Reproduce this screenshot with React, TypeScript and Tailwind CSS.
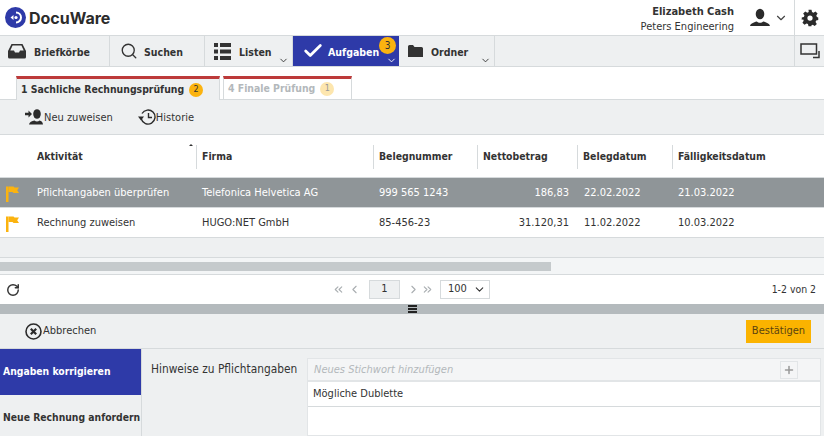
import { Check, ChevronDown, ChevronLeft, ChevronRight, ChevronsLeft, ChevronsRight, Plus, RotateCw, Search } from 'lucide-react'

const font = "font-['DejaVu_Sans_Condensed','DejaVu_Sans',sans-serif]"

function Tray() {
  return (
    <svg width="18" height="16" viewBox="0 0 18 16" fill="#333">
      <path d="M3.5 1h11L18 8v6a1.5 1.5 0 0 1-1.5 1.5h-15A1.5 1.5 0 0 1 0 14V8zM4.6 2.6 2.3 7.6H6l1 2h4l1-2h3.7l-2.3-5z" fillRule="evenodd" />
    </svg>
  )
}

function ListIcon() {
  return (
    <svg width="17" height="17" viewBox="0 0 17 17" fill="#333">
      <rect x="0" y="0" width="4" height="4" /><rect x="6" y="0" width="11" height="4" />
      <rect x="0" y="6.500" width="4" height="4" /><rect x="6" y="6.500" width="11" height="4" />
      <rect x="0" y="13" width="4" height="4" /><rect x="6" y="13" width="11" height="4" />
    </svg>
  )
}

function Folder() {
  return (
    <svg width="15" height="12" viewBox="0 0 15 12" fill="#333">
      <path d="M0 1.500A1.500 1.500 0 0 1 1.500 0h3.500l1.500 2h7A1.500 1.500 0 0 1 15 3.500V12H0z" />
    </svg>
  )
}

function Person({ size = 20 }: { size?: number }) {
  return (
    <svg width={size} height={size} viewBox="0 0 20 20" fill="#2b2b2b">
      <ellipse cx="10" cy="6" rx="4.300" ry="5.200" />
      <path d="M0 18c.5-2.500 3.500-3.600 6.800-4.500.8.900 2 1.300 3.200 1.300s2.400-.4 3.200-1.300c3.300.9 6.300 2 6.800 4.500z" />
    </svg>
  )
}

function Gear() {
  return (
    <svg width="18" height="18" viewBox="0 0 24 24" fill="#2b2b2b">
      <path fillRule="evenodd" d="M10 1h4l.7 3.100 1.900.8 2.700-1.700 2.800 2.800-1.700 2.700.8 1.900L23 11.300v3.400l-2.800.7-.8 1.900 1.700 2.700-2.800 2.800-2.700-1.700-1.900.8L14 23h-4l-.7-2.900-1.900-.8-2.700 1.700-2.800-2.800 1.700-2.700-.8-1.900L1 14.700v-3.400l2.800-.7.800-1.900-1.700-2.700 2.800-2.800 2.700 1.700 1.900-.8zM12 8.500a3.500 3.500 0 1 0 0 7 3.500 3.500 0 0 0 0-7z" />
    </svg>
  )
}

function Windows() {
  return (
    <svg width="20" height="16" viewBox="0 0 20 16" fill="none" stroke="#333">
      <rect x="1" y="1" width="15.500" height="10" strokeWidth="1.500" />
      <path d="M19 8v6.500h-6" strokeWidth="1.500" />
    </svg>
  )
}

function Flag() {
  return (
    <svg width="13" height="16" viewBox="0 0 13 16" fill="#fbb30f">
      <rect x="0" y="0.500" width="2.500" height="15.500" />
      <path d="M2.500 0.500h5l1 1h4.500l-1.800 2.700 1.800 2.800H7.500l-1-1h-4z" />
    </svg>
  )
}

function AssignIcon() {
  return (
    <svg width="18" height="16" viewBox="0 0 18 16" fill="#2b2b2b">
      <path d="M0 3.800h3.500V1.500L7 5 3.500 8.500V6.200H0z" />
      <ellipse cx="12" cy="5" rx="3.800" ry="4.800" />
      <path d="M4 15.500c.2-2.300 3-3.600 5.500-4 .7.700 1.500 1 2.500 1s1.800-.3 2.500-1c2 .4 3.300 1.700 3.500 4z" />
    </svg>
  )
}

function HistoryIcon() {
  return (
    <svg width="18" height="18" viewBox="0 0 18 18" fill="none" stroke="#2b2b2b" strokeWidth="1.400">
      <path d="M4 5.500A7 7 0 1 1 3.300 11" />
      <path d="M10.500 5v4.500h3.500" />
      <path d="M0 8.500h6L3 12.500z" fill="#2b2b2b" stroke="none" />
    </svg>
  )
}

function CancelIcon() {
  return (
    <svg width="17" height="17" viewBox="0 0 17 17" fill="none" stroke="#2b2b2b">
      <circle cx="8.500" cy="8.500" r="7.500" strokeWidth="1.600" />
      <path d="M5.800 5.800l5.400 5.400M11.200 5.800l-5.400 5.400" strokeWidth="2.200" />
    </svg>
  )
}

function NavItem({ icon, label, width, chevron }: { icon: React.ReactNode; label: string; width: string; chevron?: boolean }) {
  return (
    <div className={`relative flex items-center h-full border-r border-[#d6dadc] ${width}`}>
      <div className="flex w-[34px] shrink-0 justify-center">{icon}</div>
      <span className="pt-[3px] text-[10.5px] font-bold text-[#333]">{label}</span>
      {chevron && <ChevronDown size={11} className="absolute right-[3px] bottom-0 text-[#333]" />}
    </div>
  )
}

function HeaderCell({ label, width }: { label: string; width: string }) {
  return (
    <div className={`flex h-[24px] items-center border-l border-[#d6dadc] pl-[5px] text-[10.4px] font-bold text-[#333] ${width}`}>
      {label}
    </div>
  )
}

function Row({ cells, selected }: { cells: string[]; selected?: boolean }) {
  return (
    <div className={`flex h-[30px] items-center pt-[2px] text-[11px] border-b border-[#d6dadc] ${selected ? 'bg-[#8f9598] text-white' : 'bg-white text-[#333]'}`}>
      <div className="flex w-[37px] shrink-0 pl-[6px]"><Flag /></div>
      <div className="w-[165px]">{cells[0]}</div>
      <div className="w-[177px]">{cells[1]}</div>
      <div className="w-[90px]">{cells[2]}</div>
      <div className="w-[100px] text-right">{cells[3]}</div>
      <div className="w-[15px]" />
      <div className="w-[94px]">{cells[4]}</div>
      <div>{cells[5]}</div>
    </div>
  )
}

export default function App() {
  return (
    <div className={`flex h-[436px] w-[824px] flex-col overflow-hidden bg-white ${font}`}>
      <header className="flex h-[35px] shrink-0 items-center">
        <div className="flex items-center pl-[5px]">
          <svg width="21" height="21" viewBox="0 0 21 21">
            <circle cx="10.500" cy="10.500" r="10.500" fill="#2e3aa8" />
            <path d="M11 5.500a5 5 0 1 1 0 10" fill="none" stroke="#fff" strokeWidth="2" />
            <path d="M5.500 10.500l3-2.600v5.200z" fill="#fff" />
            <circle cx="11" cy="10.500" r="1.600" fill="#fff" />
          </svg>
          <span className="ml-[3px] font-['Inter',sans-serif] text-[16px] leading-none font-bold text-[#2b2b2b]">DocuWare</span>
        </div>
        <div className="flex-1" />
        <div className="mr-[16px] pt-[2px] text-right text-[11px] leading-[15px] text-[#333]">
          <div className="text-[11px] font-bold">Elizabeth Cash</div>
          <div>Peters Engineering</div>
        </div>
        <Person />
        <ChevronDown size={14} className="ml-[4px] mr-[6px] text-[#444]" />
        <div className="flex h-full w-[30px] items-center justify-center border-l border-[#d6dadc]"><Gear /></div>
      </header>

      <nav className="flex h-[32px] shrink-0 items-center border-y border-[#d6dadc] bg-[#eef0f1]">
        <NavItem icon={<Tray />} label="Briefkörbe" width="w-[110px]" />
        <NavItem icon={<Search size={18} strokeWidth={1.800} className="ml-[4px] text-[#333]" />} label="Suchen" width="w-[95px]" />
        <NavItem icon={<ListIcon />} label="Listen" width="w-[88px]" chevron />
        <div className="relative flex h-full w-[106px] items-center bg-[#2e3aa8] pl-[9px] text-white">
          <Check size={22} strokeWidth={3} />
          <span className="ml-[4px] pt-[3px] text-[10.5px] font-bold">Aufgaben</span>
          <span className="absolute top-[1px] right-[3px] flex h-[17px] w-[17px] items-center justify-center rounded-full bg-[#fbb30f] text-[10px] text-[#333]">3</span>
          <ChevronDown size={11} className="absolute right-[2px] bottom-0" />
        </div>
        <div className="relative flex h-full w-[96px] items-center border-r border-[#d6dadc]">
          <div className="flex w-[32px] justify-center"><Folder /></div>
          <span className="pt-[3px] text-[10.5px] font-bold text-[#333]">Ordner</span>
          <ChevronDown size={11} className="absolute right-[3px] bottom-0 text-[#333]" />
        </div>
        <div className="flex-1" />
        <div className="flex h-full w-[30px] items-center justify-center border-l border-[#d6dadc]"><Windows /></div>
      </nav>

      <div className="flex h-[33px] shrink-0 items-end gap-[3px] border-b border-[#d6dadc] pl-[16px]">
        <div className="-mb-px flex h-[24px] w-[204px] items-center gap-[5px] whitespace-nowrap border-x border-t-[3px] border-x-[#d6dadc] border-t-[#bd3a3a] bg-[#eef0f1] pl-[4px] text-[10.4px] font-bold text-[#333]">
          1 Sachliche Rechnungsprüfung
          <span className="flex h-[14px] w-[14px] items-center justify-center rounded-full bg-[#fbb30f] text-[9px] font-normal">2</span>
        </div>
        <div className="flex h-[23px] w-[129px] items-center gap-[5px] whitespace-nowrap border-x border-t-[3px] border-x-[#d6dadc] border-t-[#bd3a3a] bg-white pl-[4px] text-[10.4px] font-bold text-[#b3b8bb]">
          4 Finale Prüfung
          <span className="flex h-[14px] w-[14px] items-center justify-center rounded-full bg-[#fde6ae] text-[9px] font-normal text-[#999]">1</span>
        </div>
      </div>

      <div className="flex h-[35px] shrink-0 items-center border-b border-[#d6dadc] bg-[#eef0f1] pl-[25px] text-[11px] text-[#333]">
        <AssignIcon />
        <span className="ml-px pt-[2px]">Neu zuweisen</span>
        <div className="ml-[25px] flex"><HistoryIcon /></div>
        <span className="pt-[2px]">Historie</span>
      </div>

      <div className="flex h-[42px] shrink-0 items-center bg-white pt-[2px]">
        <div className="relative w-[196px] pl-[37px] text-[10.4px] font-bold text-[#333]">
          Aktivität
          <span className="absolute top-[-5px] right-[3px] h-0 w-0 border-x-[2px] border-b-[2px] border-x-transparent border-b-[#333]" />
        </div>
        <HeaderCell label="Firma" width="w-[177px]" />
        <HeaderCell label="Belegnummer" width="w-[104px]" />
        <HeaderCell label="Nettobetrag" width="w-[100px]" />
        <HeaderCell label="Belegdatum" width="w-[95px]" />
        <HeaderCell label="Fälligkeitsdatum" width="w-[140px]" />
      </div>

      <div className="shrink-0 border-t border-[#d6dadc]">
        <Row selected cells={['Pflichtangaben überprüfen', 'Telefonica Helvetica AG', '999 565 1243', '186,83', '22.02.2022', '21.03.2022']} />
        <Row cells={['Rechnung zuweisen', 'HUGO:NET GmbH', '85-456-23', '31.120,31', '11.02.2022', '10.03.2022']} />
      </div>

      <div className="h-[20px] shrink-0 border-b border-[#d6dadc] bg-[#eef0f1]" />
      <div className="flex h-[17px] shrink-0 items-center border-b border-[#d6dadc] bg-[#f3f5f6]">
        <div className="h-[9px] w-[551px] bg-[#c5cacc]" />
      </div>

      <div className="flex h-[29px] shrink-0 items-center bg-white text-[11px] text-[#333]">
        <RotateCw size={14} strokeWidth={2.500} className="ml-[6px] text-[#333]" />
        <div className="ml-[312px] flex items-center text-[#a9aeb1]">
          <ChevronsLeft size={13} />
          <ChevronLeft size={13} className="ml-[3px]" />
          <span className="ml-[8px] flex h-[19px] w-[31px] items-center justify-center border border-[#d6dadc] bg-[#eef0f1] text-[#333]">1</span>
          <ChevronRight size={13} className="ml-[7px]" />
          <ChevronsRight size={13} className="ml-[1px]" />
          <div className="ml-[6px] flex h-[19px] w-[50px] items-center border border-[#d6dadc] bg-white pl-[7px] text-[#333]">
            100
            <ChevronDown size={13} className="ml-[6px]" />
          </div>
        </div>
        <span className="ml-auto mr-[8px] text-[10.4px]">1-2 von 2</span>
      </div>

      <div className="flex h-[10px] shrink-0 items-center justify-center bg-[#b4babd]">
        <div className="flex w-[9px] flex-col gap-px">
          <div className="h-[2px] bg-[#222]" /><div className="h-[2px] bg-[#222]" /><div className="h-[2px] bg-[#222]" />
        </div>
      </div>

      <div className="flex h-[35px] shrink-0 items-center border-b border-[#d6dadc] bg-[#eef0f1] pr-[13px] pl-[25px] text-[11px] text-[#333]">
        <CancelIcon />
        <span className="ml-px pt-px">Abbrechen</span>
        <button className="ml-auto h-[23px] w-[65px] bg-[#fbb300] text-[11px] text-[#5a4310]">Bestätigen</button>
      </div>

      <div className="flex min-h-0 flex-1 bg-[#eef0f1]">
        <div className="w-[142px] shrink-0 border-r border-[#d6dadc] whitespace-nowrap text-[10.3px] font-bold">
          <div className="flex h-[46px] items-center bg-[#2e3aa8] pl-[3px] text-white">Angaben korrigieren</div>
          <div className="flex h-[46px] items-center pl-[3px] text-[#333]">Neue Rechnung anfordern</div>
        </div>
        <div className="w-[165px] shrink-0 pt-[15px] pl-[9px] text-[11.8px] leading-none text-[#333]">Hinweise zu Pflichtangaben</div>
        <div className="mt-[9px] mr-[3px] flex-1 border border-[#e2e5e7] bg-white text-[11px]">
          <div className="flex h-[23px] items-center justify-between border-b-2 border-[#e2e5e7] bg-[#f4f5f6] pr-[22px] pl-[6px] text-[#b3b8bb] italic">
            <span className="pt-px">Neues Stichwort hinzufügen</span>
            <span className="flex h-[18px] w-[18px] items-center justify-center border border-[#e2e5e7] text-[#999]"><Plus size={12} strokeWidth={3} /></span>
          </div>
          <div className="flex h-[25px] items-center border-b border-[#d6dadc] pt-px pl-[5px] text-[#333]">Mögliche Dublette</div>
        </div>
      </div>
    </div>
  )
}
